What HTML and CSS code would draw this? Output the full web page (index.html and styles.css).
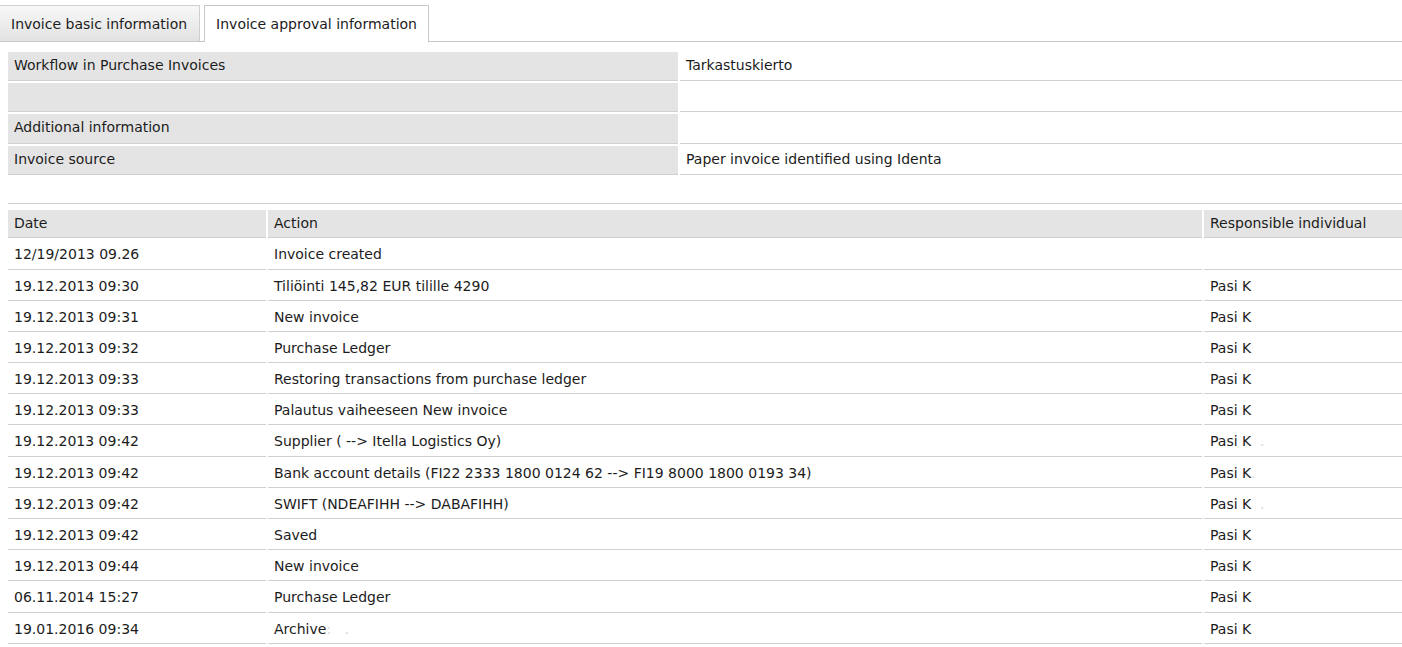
FILE: index.html
```html
<!DOCTYPE html>
<html lang="en">
<head>
<meta charset="utf-8">
<title>Invoice approval information</title>
<link rel="stylesheet" href="styles.css">
</head>
<body>
<div class="tabs">
  <div class="tab">Invoice basic information</div>
  <div class="tab active">Invoice approval information</div>
</div>
<div class="content">
  <div class="info">
    <div class="label">Workflow in Purchase Invoices</div>
    <div class="value">Tarkastuskierto</div>
    <div class="label"></div>
    <div class="value"></div>
    <div class="label">Additional information</div>
    <div class="value"></div>
    <div class="label">Invoice source</div>
    <div class="value">Paper invoice identified using Identa</div>
  </div>
  <div class="sep"></div>
  <div class="history">
    <div class="head">Date</div><div class="head">Action</div><div class="head">Responsible individual</div>
    <div class="cell">12/19/2013 09.26</div><div class="cell">Invoice created</div><div class="cell"></div>
    <div class="cell">19.12.2013 09:30</div><div class="cell">Tiliöinti 145,82 EUR tilille 4290</div><div class="cell">Pasi K</div>
    <div class="cell">19.12.2013 09:31</div><div class="cell">New invoice</div><div class="cell">Pasi K</div>
    <div class="cell">19.12.2013 09:32</div><div class="cell">Purchase Ledger</div><div class="cell">Pasi K</div>
    <div class="cell">19.12.2013 09:33</div><div class="cell">Restoring transactions from purchase ledger</div><div class="cell">Pasi K</div>
    <div class="cell">19.12.2013 09:33</div><div class="cell">Palautus vaiheeseen New invoice</div><div class="cell">Pasi K</div>
    <div class="cell">19.12.2013 09:42</div><div class="cell">Supplier ( --&gt; Itella Logistics Oy)</div><div class="cell">Pasi K<span class="blur">&nbsp;&nbsp;.</span></div>
    <div class="cell">19.12.2013 09:42</div><div class="cell">Bank account details (FI22 2333 1800 0124 62 --&gt; FI19 8000 1800 0193 34)</div><div class="cell">Pasi K<span class="blur">.</span></div>
    <div class="cell">19.12.2013 09:42</div><div class="cell">SWIFT (NDEAFIHH --&gt; DABAFIHH)</div><div class="cell">Pasi K<span class="blur">&nbsp;&nbsp;.</span></div>
    <div class="cell">19.12.2013 09:42</div><div class="cell">Saved</div><div class="cell">Pasi K</div>
    <div class="cell">19.12.2013 09:44</div><div class="cell">New invoice</div><div class="cell">Pasi K</div>
    <div class="cell">06.11.2014 15:27</div><div class="cell">Purchase Ledger</div><div class="cell">Pasi K</div>
    <div class="cell">19.01.2016 09:34</div><div class="cell">Archive<span class="blur">:&nbsp;&nbsp;&nbsp;.</span></div><div class="cell">Pasi K</div>
  </div>
</div>
</body>
</html>
```

FILE: styles.css
```css
html, body {
  margin: 0;
  padding: 0;
  background: #ffffff;
}
body {
  font-family: "DejaVu Sans", Verdana, sans-serif;
  font-size: 14px;
  color: #1c1c1c;
}
.tabs {
  display: flex;
  align-items: flex-end;
  gap: 4px;
  padding-top: 5px;
  border-bottom: 1px solid #c8c8c8;
  height: 36px;
}
.tab {
  height: 35px;
  line-height: 37px;
  padding: 0 12px 0 11px;
  background: linear-gradient(#f8f8f8, #e2e2e2);
  border: 1px solid #cfcfcf;
  border-left: none;
  border-bottom: none;
  white-space: nowrap;
}
.tab.active {
  background: #ffffff;
  border: 1px solid #c8c8c8;
  border-bottom: none;
  height: 36px;
  margin-bottom: -1px;
  padding: 0 11px 0 11px;
}
.content {
  padding: 10px 0 0 8px;
}
.info {
  display: grid;
  grid-template-columns: 670px 1fr;
  gap: 2px;
}
.label, .value, .head, .cell {
  height: 28.2px;
  line-height: 27px;
  padding: 0 6px;
  border-bottom: 1px solid #d0d0d0;
  white-space: nowrap;
  overflow: hidden;
}
.label, .head {
  background: #e4e4e4;
}
.value, .cell {
  background: #ffffff;
}
.sep {
  margin-top: 28px;
  border-top: 1px solid #d0d0d0;
}
.history {
  margin-top: 6px;
  display: grid;
  grid-template-columns: 258px 1fr 198px;
  gap: 2px;
}
.head {
  height: 27.6px;
  line-height: 27px;
}
.cell {
  line-height: 28px;
}
.blur {
  color: #d6d6d6;
}
```
